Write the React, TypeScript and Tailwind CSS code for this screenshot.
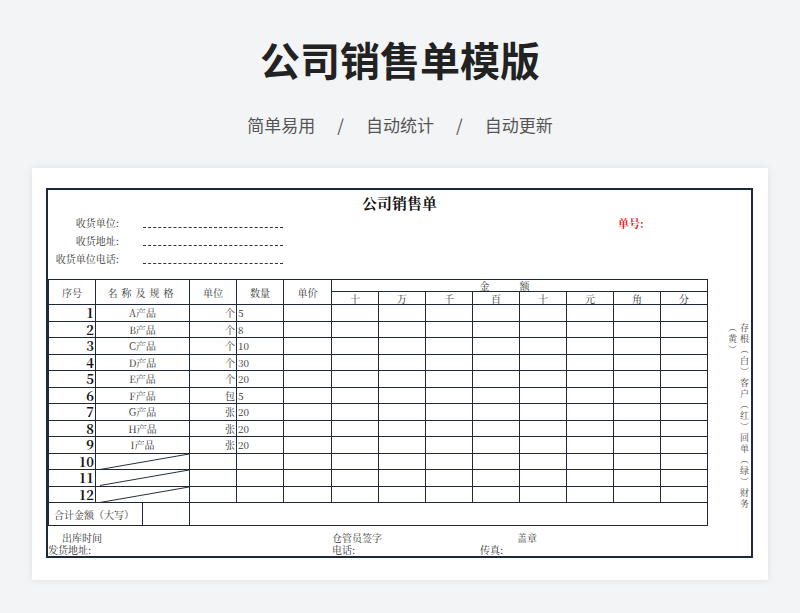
import React from "react";

const serif = { fontFamily: '"Noto Serif CJK SC","Noto Sans CJK SC","Liberation Serif",serif' };
const rows: [string, string, string][] = [
  ["A产品", "个", "5"], ["B产品", "个", "8"], ["C产品", "个", "10"], ["D产品", "个", "30"],
  ["E产品", "个", "20"], ["F产品", "包", "5"], ["G产品", "张", "20"], ["H产品", "张", "20"], ["I产品", "张", "20"],
];
const amt = ["十", "万", "千", "百", "十", "元", "角", "分"];
const B = "border border-[#1e2a3a]";

export default function App() {
  return (
    <div className="w-[800px] h-[613px] bg-[#f3f4f6] flex flex-col items-center" style={{ fontFamily: '"Noto Sans CJK SC",sans-serif' }}>
      <div className="mt-[33px] text-[40px] leading-[52px] font-bold text-[#222]">公司销售单模版</div>
      <div className="mt-[28px] text-[17px] leading-[24px] text-[#555] flex gap-[22px]">
        <span>简单易用</span><span>/</span><span>自动统计</span><span>/</span><span>自动更新</span>
      </div>
      <div className="mt-[31px] w-[736px] h-[412px] bg-white shadow-[0_0_8px_rgba(0,0,0,0.08)] pt-[20px] pl-[14px]">
        <div className="w-[707px] h-[370px] border-2 border-[#1e2a3a] relative text-[#333]" style={serif}>
          <div className="text-center text-[15px] font-bold text-[#111] mt-[3px] leading-[20px]">公司销售单</div>
          <div className="absolute left-[570px] top-[25px] text-[11px] font-bold text-[#e02020]">单号:</div>
          <div className="text-[10px] leading-[18px] mt-[1px]">
            {["收货单位:", "收货地址:", "收货单位电话:"].map((l) => (
              <div key={l} className="flex items-end">
                <span className="w-[71px] text-right">{l}</span>
                <span className="ml-[24px] w-[140px] border-b border-dashed border-[#333] mb-[4px]" />
              </div>
            ))}
          </div>
          <div className="flex mt-[11px]">
            <table className="border-collapse text-[10px] table-fixed" style={{ width: 660 }}>
              <colgroup>
                <col style={{ width: 47 }} /><col style={{ width: 94 }} /><col style={{ width: 47 }} /><col style={{ width: 47 }} /><col style={{ width: 48 }} />
                {amt.map((_, i) => <col key={i} style={{ width: 47 }} />)}
              </colgroup>
              <tbody>
                <tr className="h-[12px]">
                  <td rowSpan={2} className={B + " text-center"}>序号</td>
                  <td rowSpan={2} className={B + " text-center tracking-[4px]"}>名称及规格</td>
                  <td rowSpan={2} className={B + " text-center"}>单位</td>
                  <td rowSpan={2} className={B + " text-center"}>数量</td>
                  <td rowSpan={2} className={B + " text-center"}>单价</td>
                  <td colSpan={8} className={B + " text-center leading-[11px] tracking-[30px]"}>金额</td>
                </tr>
                <tr className="h-[13px]">
                  {amt.map((a, i) => <td key={i} className={B + " text-center leading-[11px]"}>{a}</td>)}
                </tr>
                {Array.from({ length: 12 }).map((_, i) => {
                  const r = rows[i];
                  return (
                    <tr key={i} className="h-[16.5px]">
                      <td className={B + " text-right pr-[1px] text-[13px] font-bold text-[#111] leading-[15px]"}>{i + 1}</td>
                      <td className={B + " text-center p-0 relative"}>
                        {r ? r[0] : (
                          <svg className="absolute inset-0 w-full h-full" viewBox="0 0 94 16" preserveAspectRatio="none">
                            <line x1="4" y1="16" x2="94" y2="0" stroke="#1e2a3a" strokeWidth="1" />
                          </svg>
                        )}
                      </td>
                      <td className={B + " text-right pr-[1px]"}>{r ? r[1] : ""}</td>
                      <td className={B + " pl-[1px]"}>{r ? r[2] : ""}</td>
                      <td className={B} />
                      {amt.map((_, j) => <td key={j} className={B} />)}
                    </tr>
                  );
                })}
                <tr className="h-[22px]">
                  <td colSpan={2} className={B + " p-0"}>
                    <div className="w-[94px] h-[22px] border-r border-[#1e2a3a] flex items-center pl-[5px] text-[10px]">合计金额（大写）</div>
                  </td>
                  <td colSpan={11} className={B} />
                </tr>
              </tbody>
            </table>
            <div className="ml-[18px] mt-[44px] h-[190px] text-[9px] leading-[12px] text-[#444] [writing-mode:vertical-rl] tracking-[2px]">
              存根（白）客户（红）回单（绿）财务（黄）
            </div>
          </div>
          <div className="absolute left-0 right-0 top-[342px] text-[10px] leading-[12px]">
            <div className="flex"><span className="ml-[14px] w-[270px]">出库时间</span><span className="w-[185px]">仓管员签字</span><span>盖章</span></div>
            <div className="flex"><span className="w-[284px]">发货地址:</span><span className="w-[148px]">电话:</span><span>传真:</span></div>
          </div>
        </div>
      </div>
    </div>
  );
}
